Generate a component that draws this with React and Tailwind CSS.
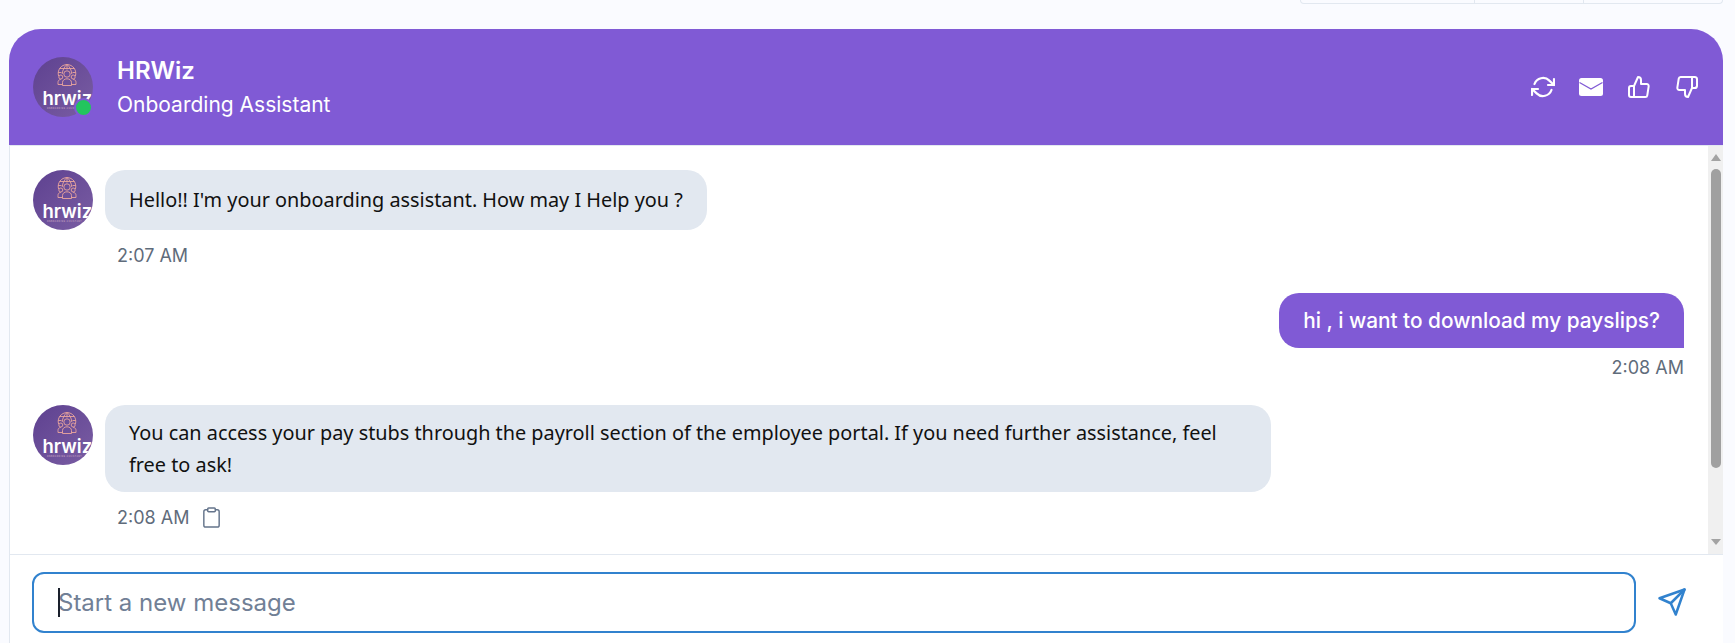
import { FiRefreshCw, FiThumbsUp, FiThumbsDown, FiSend, FiClipboard } from "react-icons/fi";

const messages = [
  {
    id: 1,
    from: "bot",
    text: "Hello!! I'm your onboarding assistant. How may I Help you ?",
    time: "2:07 AM",
  },
  { id: 2, from: "user", text: "hi , i want to download my payslips?", time: "2:08 AM" },
  {
    id: 3,
    from: "bot",
    text: "You can access your pay stubs through the payroll section of the employee portal. If you need further assistance, feel free to ask!",
    time: "2:08 AM",
    copy: true,
  },
];

function Logo() {
  return (
    <div className="relative w-[60px] h-[60px] shrink-0 overflow-hidden rounded-full bg-linear-to-br from-[#5e4190] to-[#7a5da3]">
      {/* globe + people */}
      <svg
        viewBox="0 0 20 22"
        fill="none"
        stroke="#eba69d"
        strokeWidth="0.9"
        className="absolute left-[23.500px] top-[7px] w-[20px] h-[22px]"
      >
        <path d="M1.600 12A8.800 8.800 0 1 1 18.400 12" />
        <path d="M2.500 4.500h15M1.200 8.500h3.300M15.500 8.500h3.300M10 0.500v5" />
        <path d="M5.200 10C5.500 6 7.500 2.500 10 0.500c2.500 2 4.500 5.500 4.800 9.500" />
        <circle cx="10" cy="10" r="3.200" />
        <path d="M5.500 21.500v-3c0-2.200 2-3.700 4.500-3.700s4.500 1.500 4.500 3.700v3z" />
        <circle cx="3.800" cy="13" r="2" />
        <circle cx="16.200" cy="13" r="2" />
        <path d="M5.500 20.500H1v-2c0-1.800 1-3 2.800-3M14.500 20.500H19v-2c0-1.800-1-3-2.800-3" />
      </svg>
      <div className="absolute left-[9.500px] top-[28px] text-[18.500px] leading-[26px] font-semibold text-white font-['Inter',sans-serif]">
        hrwiz
      </div>
      <div className="absolute left-[14px] top-[50px] text-[2px] leading-[3px] tracking-[0.5px] text-[#d8b4c8] whitespace-nowrap font-['Inter',sans-serif]">
        ONBOARDING ASSISTANT
      </div>
    </div>
  );
}

function MailIcon() {
  return (
    <svg viewBox="0 0 24 18" className="w-6 h-[18px]">
      <rect width="24" height="18" rx="2.500" fill="#fff" />
      <path d="M0.500 4.500 12 11l11.500-6.500" fill="none" stroke="#805ad5" strokeWidth="1.300" />
    </svg>
  );
}

function Scrollbar() {
  return (
    <div className="flex flex-col w-[15px] shrink-0 bg-[#f0f0f0]">
      <svg viewBox="0 0 10 7" className="w-[10px] h-[7px] mx-auto mt-[8px] fill-[#a3a3a3]">
        <path d="M5 0l5 7H0z" />
      </svg>
      <div className="mx-auto mt-[8px] w-[10px] h-[299px] rounded-full bg-[#a0a0a0]" />
      <svg viewBox="0 0 10 6" className="w-[10px] h-[6px] mx-auto mt-auto mb-[9px] fill-[#a3a3a3]">
        <path d="M0 0h10L5 6z" />
      </svg>
    </div>
  );
}

export default function App() {
  return (
    <div className="h-[643px] bg-[#fafbff] flex flex-col font-['Inter',sans-serif] overflow-hidden">
      {/* cut off table above the chat */}
      <div className="flex justify-end h-[4px] pr-[12px]">
        <div className="flex w-[423px] border border-t-0 border-[#e2e8f0] rounded-b-lg">
          <div className="w-[174px] border-r border-[#e2e8f0]" />
          <div className="w-[109px] border-r border-[#e2e8f0]" />
        </div>
      </div>

      <div className="mt-[25px] ml-[9px] mr-[12px] flex-1 flex flex-col min-h-0">
        {/* Header */}
        <div className="h-[117px] shrink-0 bg-[#805ad5] rounded-t-[32px] flex items-center justify-between pl-[24px] pr-[24px] text-white border-b border-[#e2e8f0]">
          <div className="flex items-center gap-[24px]">
            <div className="relative">
              <Logo />
              <span className="absolute right-0 bottom-0 w-[19px] h-[19px] rounded-full bg-[#22c55e] border-2 border-[#805ad5]" />
            </div>
            <div className="pt-[2px]">
              <div className="text-[24px] leading-[32px] font-semibold">HRWiz</div>
              <div className="mt-[2px] text-[21px] leading-[32px]">Onboarding Assistant</div>
            </div>
          </div>
          <div className="flex items-center gap-[24px]">
            <FiRefreshCw size={24} strokeWidth={2.200} />
            <MailIcon />
            <FiThumbsUp size={24} />
            <FiThumbsDown size={24} />
          </div>
        </div>

        <div className="flex-1 flex min-h-0 bg-white border-l border-[#e2e8f0]">
          {/* Messages */}
          <div className="flex-1 flex flex-col gap-[25px] pl-[23px] pr-[24px] pt-[24px]">
            {messages.map((m) =>
              m.from === "bot" ? (
                <div key={m.id} className="flex gap-[12px]">
                  <Logo />
                  <div className="flex-1 min-w-0 flex flex-col items-start">
                    <div className="max-w-[1166px] min-h-[60px] flex items-center bg-[#e2e8f0] rounded-[20px] px-[24px] py-[11.500px] text-[19.850px] leading-[32px] text-[#111111] font-['Noto_Sans',sans-serif]">
                      <span>{m.text}</span>
                    </div>
                    <div className="mt-[13px] pl-[12px] flex items-center gap-[11px] text-[18px] leading-[25px] text-[#5f6c7b]">
                      <span>{m.time}</span>
                      {m.copy && <FiClipboard size={23} strokeWidth={1.500} className="text-[#64748b]" />}
                    </div>
                  </div>
                </div>
              ) : (
                <div key={m.id} className="flex flex-col items-end">
                  <div className="h-[55px] flex items-center bg-[#805ad5] text-white rounded-[20px] rounded-br-none px-[24px] text-[20.800px] leading-[31px] font-medium">
                    {m.text}
                  </div>
                  <div className="mt-[8px] text-[18px] leading-[24px] text-[#5f6c7b]">{m.time}</div>
                </div>
              )
            )}
          </div>
          <Scrollbar />
        </div>

        {/* Composer */}
        <div className="h-[89px] shrink-0 bg-white border-t border-l border-[#e2e8f0] flex items-start gap-[21px] pt-[17px] pl-[22px] pr-[36px]">
          <div className="relative flex-1 h-[61px] rounded-[12px] border-2 border-[#3182ce] flex items-center pl-[24px] text-[24px] text-[#718096]">
            <span className="absolute left-[24px] top-[14px] w-[2px] h-[29px] bg-[#1a202c]" />
            Start a new message
          </div>
          <FiSend size={30} className="text-[#3182ce] mt-[15px]" />
        </div>
      </div>
    </div>
  );
}
